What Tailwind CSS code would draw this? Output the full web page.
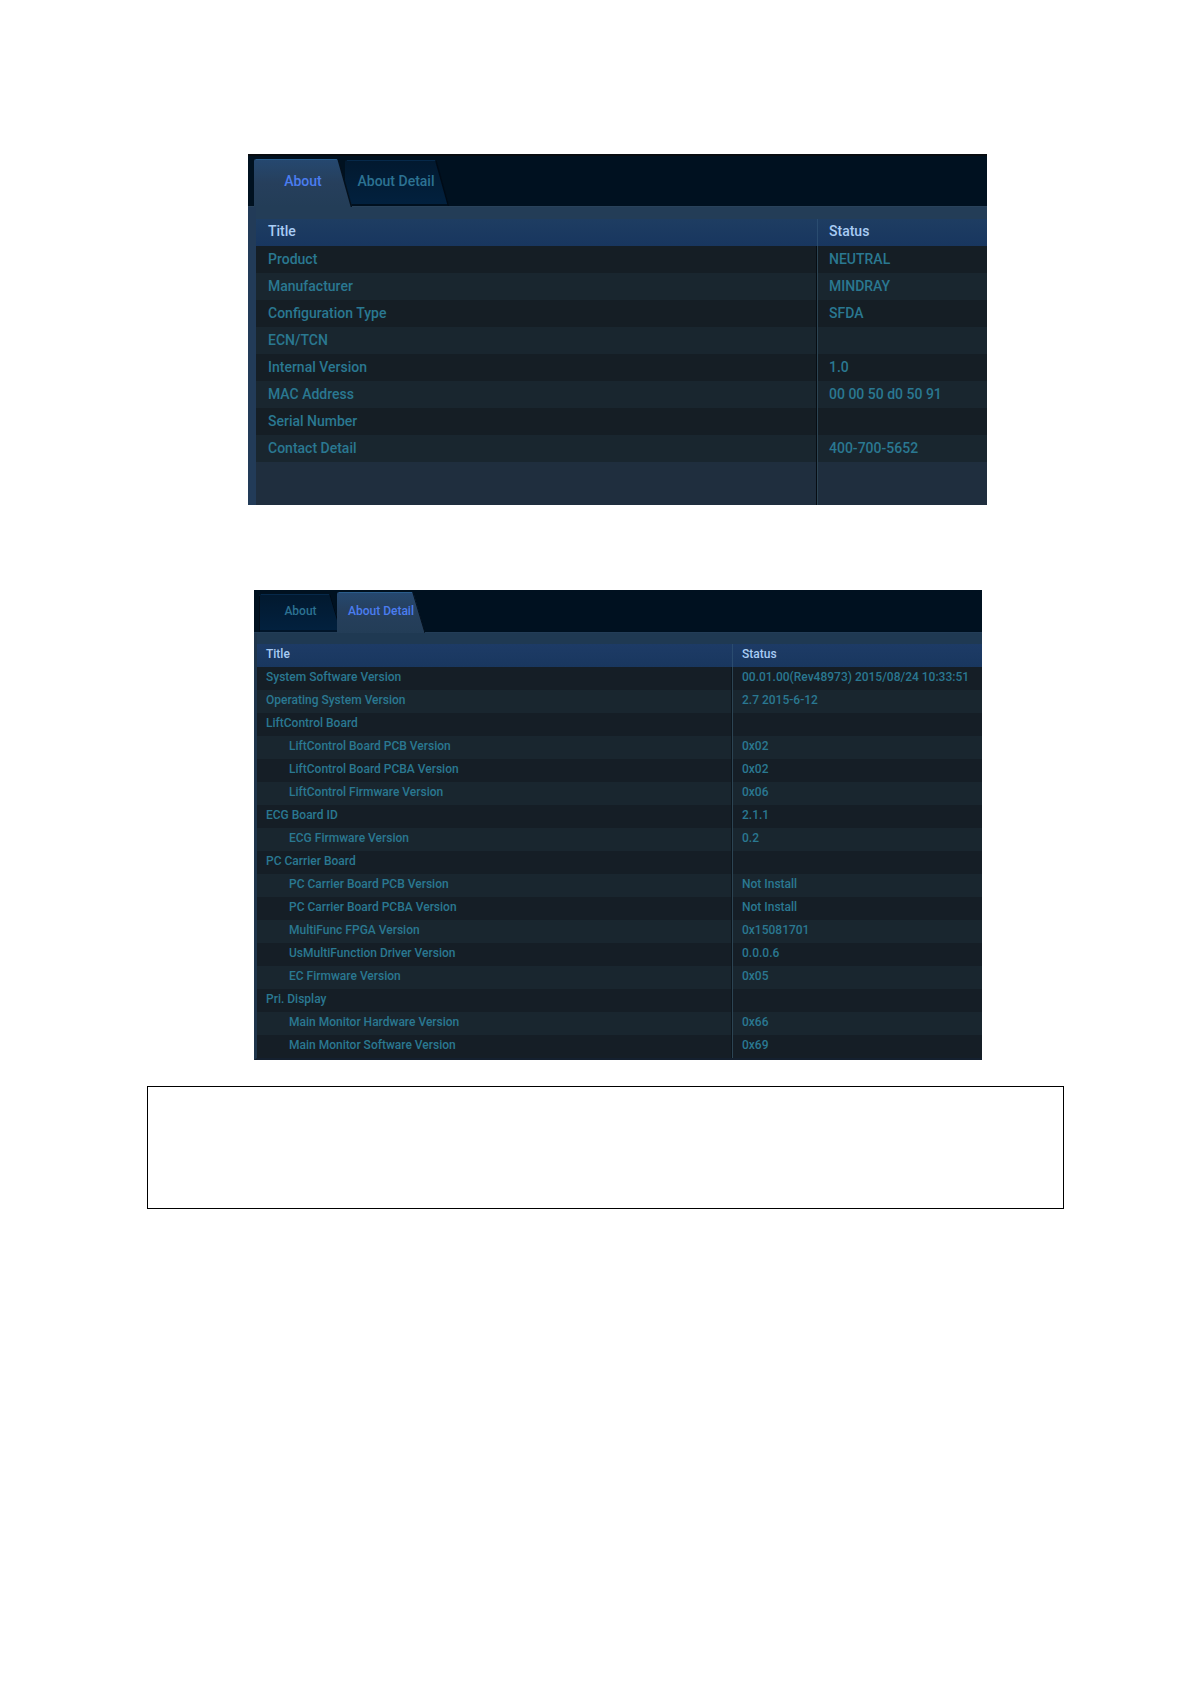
<!DOCTYPE html>
<html lang="en">
<head>
<meta charset="utf-8">
<title>About</title>
<script src="https://cdn.jsdelivr.net/npm/@tailwindcss/browser@4"></script>
</head>
<body class="bg-white font-['Roboto',sans-serif]">
<main class="flex min-h-screen flex-col pt-[154px] pr-[126px] pl-[147px]">

  <!-- About -->
  <section class="mr-[77px] ml-[101px] flex flex-col bg-[#233d57]">
    <div role="tablist" class="flex h-[53px] items-end border-t-2 border-b border-t-[#080c10] border-b-[#29425a] bg-[#001120] pl-[6px] text-sm font-medium">
      <button role="tab" aria-selected="true" class="relative z-10 -mb-px h-12 w-[98px] pb-1 text-[#4b7df0]">
        <svg class="absolute inset-0 size-full" viewBox="0 0 97 47" preserveAspectRatio="none" aria-hidden="true">
          <defs><linearGradient id="g1" x1="0" y1="0" x2="0" y2="1"><stop offset="0" stop-color="#254870"/><stop offset=".5" stop-color="#263f5c"/><stop offset="1" stop-color="#233d57"/></linearGradient></defs>
          <path d="M0 47V2Q0 0 2 0H81Q83 0 84 3L97 47Z" fill="url(#g1)"/>
          <path d="M2 .5H82" stroke="#2a5d8c" fill="none"/>
          <path d="M83.500 1L96.500 47" stroke="#04101c" stroke-width="1.5" fill="none"/>
        </svg>
        <span class="relative">About</span>
      </button>
      <button role="tab" aria-selected="false" class="relative -ml-[7px] h-[46px] w-[104px] pr-[2px] pb-1 text-[#2c7292]">
        <svg class="absolute inset-0 size-full" viewBox="0 0 104 45" preserveAspectRatio="none" aria-hidden="true">
          <defs><linearGradient id="g2" x1="0" y1="0" x2="0" y2="1"><stop offset="0" stop-color="#02192f"/><stop offset="1" stop-color="#02213f"/></linearGradient></defs>
          <path d="M0 45V2Q0 0 2 0H89Q91 0 92 3L104 45Z" fill="url(#g2)"/>
          <path d="M2 .5H90" stroke="#06294a" fill="none"/>
          <path d="M91 1L103.500 45M0 44H103" stroke="#000b16" stroke-width="1.5" fill="none"/>
        </svg>
        <span class="relative">About Detail</span>
      </button>
    </div>
    <div class="border-l-8 border-[#223b58] pt-3">
      <table class="w-full table-fixed border-separate border-spacing-0 text-left text-sm font-medium text-[#2a7891]">
        <thead class="bg-linear-to-b from-[#1e3d62] to-[#18365f] text-[#a9ccf4]">
          <tr class="h-[27px]"><th class="p-0 pb-[3px] pl-3 font-medium">Title</th><th class="w-[170px] border-l border-[#2a4c70] p-0 pb-[3px] pl-[11px] font-medium">Status</th></tr>
        </thead>
        <tbody class="[&_td]:p-0 [&_td]:pb-px [&_td]:pl-3 [&_td:last-child]:border-l [&_td:last-child]:border-[#2c4453] [&_td:last-child]:pl-[11px] [&_td:first-child]:border-r [&_td:first-child]:border-r-[#070d13] [&_tr]:h-[27px] [&_tr:nth-child(odd)]:bg-[#151e25] [&_tr:nth-child(even)]:bg-[#19262f]">
          <tr><td>Product</td><td>NEUTRAL</td></tr>
          <tr><td>Manufacturer</td><td>MINDRAY</td></tr>
          <tr><td>Configuration Type</td><td>SFDA</td></tr>
          <tr><td>ECN/TCN</td><td></td></tr>
          <tr><td>Internal Version</td><td>1.0</td></tr>
          <tr><td>MAC Address</td><td>00 00 50 d0 50 91</td></tr>
          <tr><td>Serial Number</td><td></td></tr>
          <tr><td>Contact Detail</td><td>400-700-5652</td></tr>
        </tbody>
      </table>
      <div class="flex h-[43px] bg-[#1f2e3e]"><div class="flex-1 border-r border-[#070d13]"></div><div class="w-[170px] border-l border-[#2c4453]"></div></div>
    </div>
  </section>

  <!-- About Detail -->
  <section class="mt-[85px] mr-[82px] ml-[107px] flex flex-col bg-[#1f3952]">
    <div role="tablist" class="flex h-[43px] items-end border-b border-[#233d57] bg-[#001120] pl-[5px] text-xs font-medium">
      <button role="tab" aria-selected="false" class="relative h-[38px] w-[83px] pb-1 text-[#2c7292]">
        <svg class="absolute inset-0 size-full" viewBox="0 0 83 38" preserveAspectRatio="none" aria-hidden="true">
          <path d="M0 38V2Q0 0 2 0H69Q71 0 72 3L83 38Z" fill="url(#g2)"/>
          <path d="M2 .5H70" stroke="#06294a" fill="none"/>
          <path d="M71 1L82 38M0 37H83M.5 2V38" stroke="#000b16" fill="none"/>
        </svg>
        <span class="relative">About</span>
      </button>
      <button role="tab" aria-selected="true" class="relative z-10 -mb-px -ml-[5px] h-[41px] w-[88px] pb-1 text-[#4b7df0]">
        <svg class="absolute inset-0 size-full" viewBox="0 0 88 41" preserveAspectRatio="none" aria-hidden="true">
          <path d="M0 41V2Q0 0 2 0H74Q76 0 77 3L88 41Z" fill="url(#g1)"/>
          <path d="M2 .5H75" stroke="#2a5d8c" fill="none"/>
          <path d="M76 1L88 41" stroke="#04101c" fill="none"/>
        </svg>
        <span class="relative">About Detail</span>
      </button>
    </div>
    <div class="border-b-2 border-l-[3px] border-b-[#14202f] border-l-[#1f354b] pt-[11px]">
      <table class="w-full table-fixed border-separate border-spacing-0 text-left text-xs font-medium text-[#2a7891]">
        <thead class="bg-linear-to-b from-[#1d3b66] to-[#19375f] text-[#a9ccf4]">
          <tr class="h-[23px]"><th class="p-0 pb-[3px] pl-[9px] font-medium">Title</th><th class="w-[250px] border-l border-[#2a4c70] p-0 pb-[3px] pl-[9px] font-medium">Status</th></tr>
        </thead>
        <tbody class="[&_td]:p-0 [&_td]:pb-[3px] [&_td]:pl-[9px] [&_td.sub]:pl-8 [&_td:last-child]:border-l [&_td:last-child]:border-[#2c4453] [&_td:first-child]:border-r [&_td:first-child]:border-r-[#0c141b] [&_tr]:h-[23px] [&_tr:nth-child(odd)]:bg-[#151e26] [&_tr:nth-child(even)]:bg-[#19262f]">
          <tr><td>System Software Version</td><td>00.01.00(Rev48973) 2015/08/24 10:33:51</td></tr>
          <tr><td>Operating System Version</td><td>2.7 2015-6-12</td></tr>
          <tr><td>LiftControl Board</td><td></td></tr>
          <tr><td class="sub">LiftControl Board PCB Version</td><td>0x02</td></tr>
          <tr><td class="sub">LiftControl Board PCBA Version</td><td>0x02</td></tr>
          <tr><td class="sub">LiftControl Firmware Version</td><td>0x06</td></tr>
          <tr><td>ECG Board ID</td><td>2.1.1</td></tr>
          <tr><td class="sub">ECG Firmware Version</td><td>0.2</td></tr>
          <tr><td>PC Carrier Board</td><td></td></tr>
          <tr><td class="sub">PC Carrier Board PCB Version</td><td>Not Install</td></tr>
          <tr><td class="sub">PC Carrier Board PCBA Version</td><td>Not Install</td></tr>
          <tr><td class="sub">MultiFunc FPGA Version</td><td>0x15081701</td></tr>
          <tr><td class="sub">UsMultiFunction Driver Version</td><td>0.0.0.6</td></tr>
          <tr><td class="sub">EC Firmware Version</td><td>0x05</td></tr>
          <tr><td>Pri. Display</td><td></td></tr>
          <tr><td class="sub">Main Monitor Hardware Version</td><td>0x66</td></tr>
          <tr><td class="sub">Main Monitor Software Version</td><td>0x69</td></tr>
        </tbody>
      </table>
    </div>
  </section>

  <div class="mt-[26px] min-h-[123px] border border-black"></div>
</main>
</body>
</html>
